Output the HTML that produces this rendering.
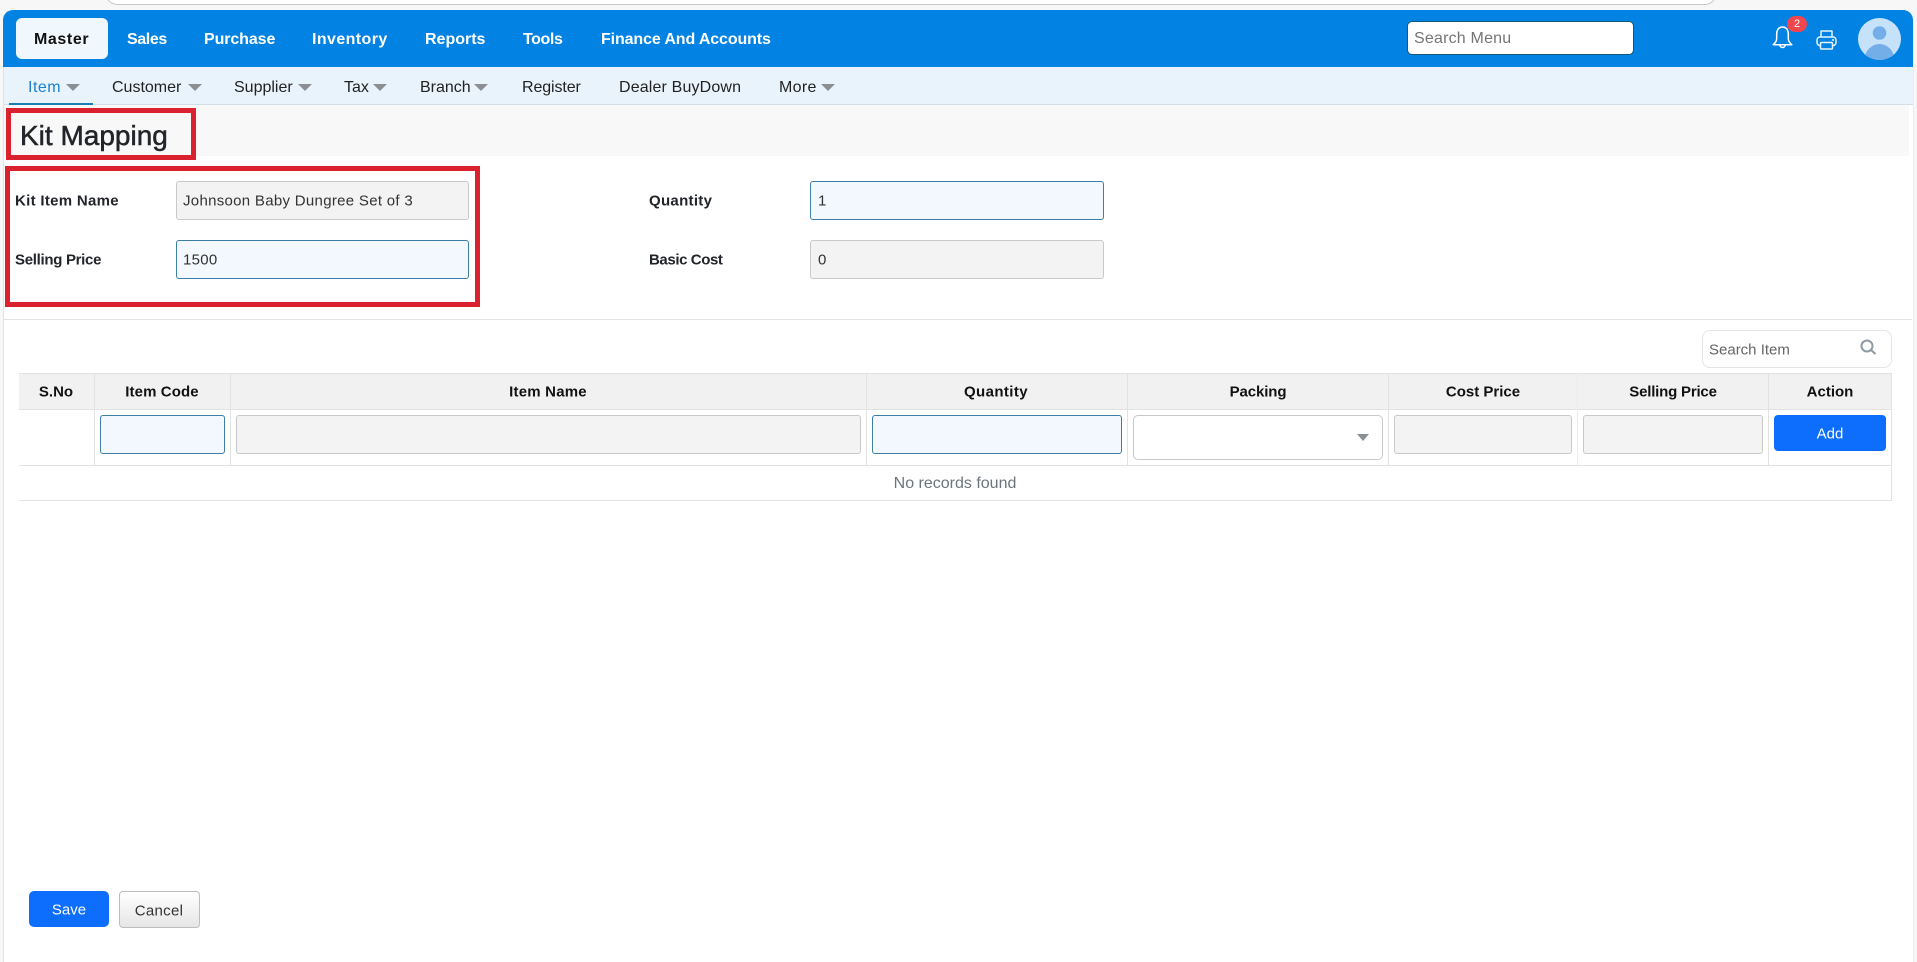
<!DOCTYPE html>
<html><head><meta charset="utf-8"><title>Kit Mapping</title>
<style>
*{box-sizing:border-box}
html,body{margin:0;padding:0;width:1917px;height:962px;overflow:hidden;background:#f7f7f7;font-family:"Liberation Sans",sans-serif;color:#212529}
.a{position:absolute}
.t{position:absolute;white-space:nowrap;transform:translateY(-50%)}
.c{position:absolute;white-space:nowrap;transform:translate(-50%,-50%)}
.n{font-size:16px;font-weight:700;color:#fff;top:40px}
.s{font-size:16px;color:#222;top:88px}
.car{position:absolute;top:84px;width:0;height:0;border-left:7px solid transparent;border-right:7px solid transparent;border-top:7px solid #8b8f93}
.l{font-size:15px;font-weight:700;color:#212529}
.i{position:absolute;border-radius:3px;border:1px solid #c9c9c9;background:#f3f3f3;height:39px}
.b{border:1px solid #3d7ea6;background:#f3f8fe}
.th{font-size:15px;font-weight:700;top:392px;color:#111}
.v{position:absolute;width:1px;background:#e2e2e2}
.tv{font-size:15px;color:#333;letter-spacing:.3px}
</style></head><body>
<div class="a" style="left:105px;top:-20px;width:1612px;height:25px;background:#fff;border:1px solid #c9c9c9;border-radius:14px"></div>
<div class="a" style="left:3px;top:67px;width:1911px;height:895px;background:#fff;border-left:1px solid #e3e3e3;border-right:1px solid #ececec"></div>
<div class="a" style="left:3px;top:10px;width:1910px;height:57px;background:#0283e4;border-radius:10px 10px 0 0"></div>
<div class="a" style="left:16px;top:18px;width:92px;height:41px;background:#f0f7fd;border-radius:6px"></div>
<span class="t n" style="left:34px;color:#111;letter-spacing:.6px">Master</span>
<span class="t n" style="left:127px;letter-spacing:-.4px">Sales</span>
<span class="t n" style="left:204px;letter-spacing:-.1px">Purchase</span>
<span class="t n" style="left:312px;letter-spacing:.4px">Inventory</span>
<span class="t n" style="left:425px">Reports</span>
<span class="t n" style="left:523px;letter-spacing:-.4px">Tools</span>
<span class="t n" style="left:601px;letter-spacing:-.12px">Finance And Accounts</span>

<div class="a" style="left:1407px;top:21px;width:227px;height:34px;background:#fff;border:1px solid #0c5a78;border-radius:5px"></div>
<span class="t" style="left:1414px;top:39px;font-size:16px;color:#757575;letter-spacing:.2px">Search Menu</span>

<svg class="a" style="left:1772px;top:26px" width="21" height="24" viewBox="0 0 21 24" fill="none" stroke="#fff" stroke-width="1.5" stroke-linejoin="round"><path d="M10.5 1C6.5 1 4.700 4.200 4.700 8v4.500c0 2.700-1.600 4.600-3.500 6.200h18.600c-1.900-1.600-3.500-3.500-3.500-6.200V8c0-3.800-1.800-7-5.800-7z"/><path d="M7.800 18.800a2.700 2.700 0 0 0 5.400 0"/></svg>
<div class="a" style="left:1787px;top:16px;width:20px;height:16px;background:#f0474f;border-radius:8px"></div>
<span class="c" style="left:1797px;top:24px;font-size:11px;color:#fff">2</span>
<svg class="a" style="left:1816px;top:30px" width="21" height="20" viewBox="0 0 21 20" fill="none" stroke="#e6f4ff" stroke-width="1.5" stroke-linejoin="round"><path d="M5 7V1h11v6"/><rect x="1" y="7" width="19" height="8.500" rx="3"/><rect x="4.500" y="12.500" width="12" height="6.500" rx="1" fill="#0283e4"/><path d="M16 10h2"/></svg>
<svg class="a" style="left:1858px;top:18px" width="43" height="42" viewBox="0 0 43 42"><defs><clipPath id="av"><ellipse cx="21.500" cy="21" rx="21.500" ry="21"/></clipPath></defs><ellipse cx="21.500" cy="21" rx="21.500" ry="21" fill="#c6e2fb"/><g clip-path="url(#av)"><circle cx="21.500" cy="15" r="6.800" fill="#74aee8"/><ellipse cx="21.500" cy="42" rx="15" ry="16" fill="#74aee8"/></g></svg>

<div class="a" style="left:4px;top:67px;width:1909px;height:38px;background:#e9f3fc;border-bottom:1px solid #d3dde6"></div>
<div class="a" style="left:9px;top:103px;width:84px;height:2px;background:#1c7fb4"></div>
<span class="t s" style="left:28px;color:#1a7fd0;letter-spacing:.5px">Item</span><i class="car" style="left:66px"></i>
<span class="t s" style="left:112px">Customer</span><i class="car" style="left:188px"></i>
<span class="t s" style="left:234px">Supplier</span><i class="car" style="left:298px"></i>
<span class="t s" style="left:344px">Tax</span><i class="car" style="left:373px"></i>
<span class="t s" style="left:420px">Branch</span><i class="car" style="left:474px"></i>
<span class="t s" style="left:522px;letter-spacing:-.1px">Register</span>
<span class="t s" style="left:619px;letter-spacing:.15px">Dealer BuyDown</span>
<span class="t s" style="left:779px;letter-spacing:.3px">More</span><i class="car" style="left:821px"></i>

<div class="a" style="left:4px;top:105px;width:1905px;height:51px;background:#f8f8f8"></div>
<span class="t" style="left:20px;top:136px;font-size:28px;color:#212529;-webkit-text-stroke:.5px #212529">Kit Mapping</span>
<div class="a" style="left:6px;top:108px;width:190px;height:52px;border:5px solid #d9222e"></div>
<div class="a" style="left:5px;top:166px;width:475px;height:141px;border:5px solid #d9222e"></div>

<span class="t l" style="left:15px;top:201px;letter-spacing:.3px">Kit Item Name</span>
<div class="i" style="left:176px;top:181px;width:293px"></div>
<span class="t tv" style="left:183px;top:201px">Johnsoon Baby Dungree Set of 3</span>
<span class="t l" style="left:15px;top:260px;letter-spacing:-.3px">Selling Price</span>
<div class="i b" style="left:176px;top:240px;width:293px"></div>
<span class="t tv" style="left:183px;top:260px">1500</span>
<span class="t l" style="left:649px;top:201px;letter-spacing:.3px">Quantity</span>
<div class="i b" style="left:810px;top:181px;width:294px"></div>
<span class="t tv" style="left:818px;top:201px">1</span>
<span class="t l" style="left:649px;top:260px;letter-spacing:-.4px">Basic Cost</span>
<div class="i" style="left:810px;top:240px;width:294px"></div>
<span class="t tv" style="left:818px;top:260px">0</span>

<div class="a" style="left:4px;top:319px;width:1908px;height:1px;background:#e3e3e3"></div>

<div class="a" style="left:1702px;top:330px;width:190px;height:38px;border:1px solid #e5e5e5;border-radius:8px;background:#fff"></div>
<span class="t" style="left:1709px;top:350px;font-size:15px;color:#666">Search Item</span>
<svg class="a" style="left:1860px;top:339px" width="17" height="16" viewBox="0 0 17 16" fill="none" stroke="#8d9aa5" stroke-width="2"><circle cx="7" cy="7" r="5.500"/><path d="M11 11l4.500 4"/></svg>

<div class="a" style="left:19px;top:373px;width:1873px;height:128px;border-top:1px solid #e2e2e2;border-right:1px solid #e2e2e2;border-bottom:1px solid #e2e2e2"></div>
<div class="a" style="left:19px;top:374px;width:1872px;height:36px;background:#f1f1f1;border-bottom:1px solid #e2e2e2"></div>
<div class="a" style="left:19px;top:465px;width:1872px;height:1px;background:#e2e2e2"></div>
<div class="v" style="left:94px;top:373px;height:92px"></div>
<div class="v" style="left:230px;top:373px;height:92px"></div>
<div class="v" style="left:866px;top:373px;height:92px"></div>
<div class="v" style="left:1127px;top:373px;height:92px"></div>
<div class="v" style="left:1388px;top:373px;height:92px"></div>
<div class="v" style="left:1577px;top:373px;height:92px;background:#ececec"></div>
<div class="v" style="left:1768px;top:373px;height:92px"></div>

<span class="c th" style="left:56px">S.No</span>
<span class="c th" style="left:162px;letter-spacing:.1px">Item Code</span>
<span class="c th" style="left:548px;letter-spacing:.2px">Item Name</span>
<span class="c th" style="left:996px;letter-spacing:.4px">Quantity</span>
<span class="c th" style="left:1258px;letter-spacing:-.1px">Packing</span>
<span class="c th" style="left:1483px">Cost Price</span>
<span class="c th" style="left:1673px;letter-spacing:-.2px">Selling Price</span>
<span class="c th" style="left:1830px">Action</span>

<div class="i b" style="left:100px;top:415px;width:125px"></div>
<div class="i" style="left:236px;top:415px;width:625px"></div>
<div class="i b" style="left:872px;top:415px;width:250px"></div>
<div class="a" style="left:1133px;top:415px;width:250px;height:45px;background:#fff;border:1px solid #c9c9c9;border-radius:5px"></div>
<div class="a" style="left:1357px;top:434px;width:0;height:0;border-left:6px solid transparent;border-right:6px solid transparent;border-top:7px solid #8b8f93"></div>
<div class="i" style="left:1394px;top:415px;width:178px"></div>
<div class="i" style="left:1583px;top:415px;width:180px"></div>
<div class="a" style="left:1774px;top:415px;width:112px;height:36px;background:#0d6efd;border-radius:4px"></div>
<span class="c" style="left:1830px;top:434px;font-size:15px;color:#fff">Add</span>

<span class="c" style="left:955px;top:484px;font-size:16px;color:#6c757d">No records found</span>

<div class="a" style="left:29px;top:891px;width:80px;height:36px;background:#0d6efd;border-radius:5px"></div>
<span class="c" style="left:69px;top:910px;font-size:15px;color:#fff">Save</span>
<div class="a" style="left:119px;top:891px;width:81px;height:37px;background:linear-gradient(#fff,#e6e6e6);border:1px solid #bdbdbd;border-radius:4px"></div>
<span class="c" style="left:159px;top:911px;font-size:15px;color:#333;letter-spacing:.3px">Cancel</span>
</body></html>
